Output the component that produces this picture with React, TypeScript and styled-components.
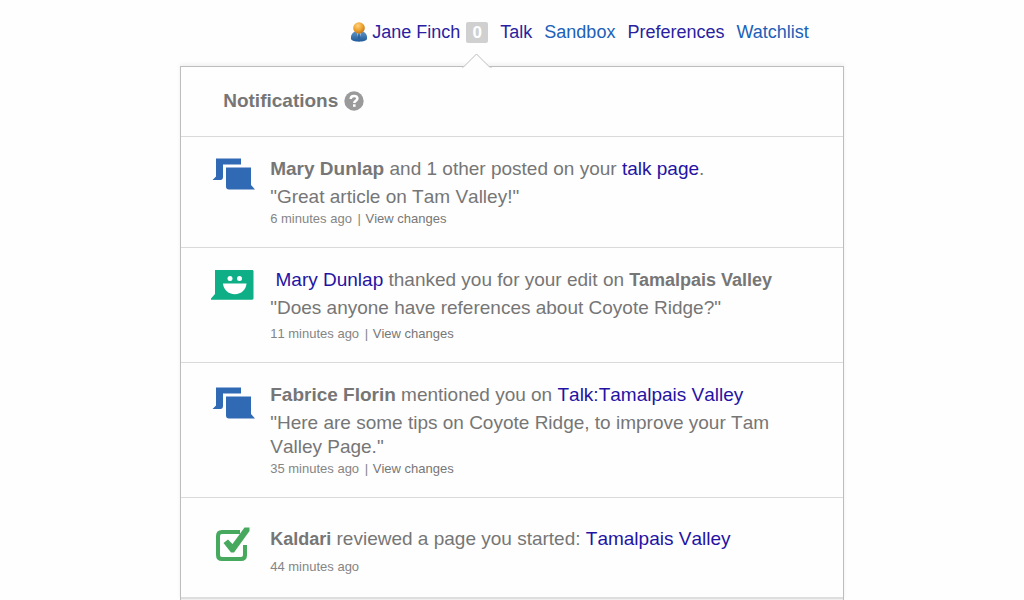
import React from "react";
import styled, { createGlobalStyle } from "styled-components";

const GlobalStyle = createGlobalStyle`
  * { box-sizing: border-box; }
  body {
    margin: 0;
    background: #fefefe;
    color: #767676;
    font-family: "Liberation Sans", Arial, Helvetica, sans-serif;
  }
  a { text-decoration: none; }
  a:hover { text-decoration: underline; }
  p, h1, ul { margin: 0; padding: 0; }
  svg { display: block; }
`;

const Page = styled.div`
  display: flex;
  flex-direction: column;
  width: calc(65% - 2px);
  min-width: 600px;
  max-width: 760px;
  min-height: 100vh;
  margin: 0 auto;
`;

const Nav = styled.nav`
  display: flex;
  align-items: center;
  justify-content: flex-end;
  gap: 12px;
  height: 66px;
  padding: 0 35px 2px 0;
  font-size: 18px;
  line-height: 24px;
`;

const User = styled.div`
  display: flex;
  align-items: center;
  gap: 6px;
`;

const NavLink = styled.a<{ $visited?: boolean }>`
  display: flex;
  align-items: center;
  gap: 4px;
  white-space: nowrap;
  color: ${(p) => (p.$visited ? "#2a1fa0" : "#2060b8")};
`;

const BadgeAnchor = styled.div`
  position: relative;
`;

const Badge = styled.button`
  display: block;
  width: 22px;
  height: 21px;
  padding: 0;
  border: 0;
  border-radius: 2px;
  background: #d0d0d0;
  color: #ffffff;
  font: bold 17px/21px "Liberation Sans", Arial, sans-serif;
  cursor: pointer;
`;

const Caret = styled.svg`
  position: absolute;
  top: 31px;
  left: -4px;
`;

const Panel = styled.section`
  display: flex;
  flex: 1;
  flex-direction: column;
  border: 1px solid #bdbdbd;
  border-bottom: 0;
  background: #fefefe;
  box-shadow: 0 -2px 4px rgba(0, 0, 0, 0.06);
`;

const PanelHeader = styled.header`
  display: flex;
  align-items: center;
  gap: 6px;
  height: 70px;
  padding: 0 0 2px 42px;
  border-bottom: 1px solid #dadada;
`;

const Heading = styled.h1`
  font-size: 19px;
  line-height: 24px;
`;

const HelpButton = styled.button`
  padding: 0;
  border: 0;
  background: none;
  cursor: pointer;
`;

const List = styled.ul`
  list-style: none;
  font-kerning: none;
`;

const Item = styled.li<{ $roomy?: boolean }>`
  display: grid;
  grid-template-columns: 44px 1fr;
  column-gap: 15px;
  padding: ${(p) => (p.$roomy ? "29px 60px 20px 30px" : "20px 60px 18px 30px")};
  border-bottom: 1px solid #dadada;
  font-size: 19px;
  line-height: 24px;

  &:last-child { border-bottom: 0; }
`;

const IconCell = styled.div<{ $tall?: boolean }>`
  padding-top: ${(p) => (p.$tall ? 3 : 0)}px;
`;

const Title = styled.p`
  white-space: nowrap;
`;

const Subject = styled.strong`
  font-size: 18px;
  font-kerning: normal;
`;

const Quote = styled.p`
  margin-top: 4px;
`;

const Meta = styled.p<{ $gap?: number }>`
  margin-top: ${(p) => p.$gap ?? 0}px;
  font-size: 13px;
  line-height: 20px;
  color: #858585;
`;

const Separator = styled.span`
  margin: 0 1px 0 2px;
`;

const TextLink = styled.a`
  color: #2413a3;
`;

const MetaLink = styled.a`
  color: #777777;
`;

const Footer = styled.footer`
  flex: 1;
  border-top: 2px solid #dedede;
  background: #f0f0f0;
`;

const UserIcon = () => (
  <svg width="18" height="21" viewBox="0 0 18 21" aria-hidden="true">
    <defs>
      <radialGradient id="head" cx="40%" cy="30%" r="70%">
        <stop offset="0" stopColor="#ffd27a" />
        <stop offset="0.6" stopColor="#eda02c" />
        <stop offset="1" stopColor="#b9761c" />
      </radialGradient>
      <linearGradient id="torso" x1="0" y1="0" x2="0" y2="1">
        <stop offset="0" stopColor="#5f93c4" />
        <stop offset="1" stopColor="#1f5a98" />
      </linearGradient>
    </defs>
    <path d="M1 17C0.500 13 2.500 10 6 9.500H12C15.500 10 17.500 13 17 17C16 20.500 2 20.500 1 17Z" fill="url(#torso)" />
    <path d="M6.500 10L9 18L11.500 10Z" fill="#a9c9e4" />
    <path d="M8.300 11.500H9.700L10.200 17L9 19L7.800 17Z" fill="#2b659f" />
    <circle cx="9" cy="6" r="5.800" fill="url(#head)" />
  </svg>
);

const HelpIcon = () => (
  <svg width="20" height="20" viewBox="0 0 20 20" aria-hidden="true">
    <circle cx="10" cy="10" r="9.700" fill="#9a9a9a" />
    <path d="M6.700 8C6.700 5.800 8.200 4.900 10 4.900C12 4.900 13.400 6 13.400 7.600C13.400 9.800 10.300 9.900 10.300 12" fill="none" stroke="#fff" strokeWidth="2.500" />
    <rect x="9" y="13.300" width="2.600" height="2.500" fill="#fff" />
  </svg>
);

const ChatIcon = () => (
  <svg width="44" height="34" viewBox="0 0 44 34" aria-hidden="true">
    <path d="M5 1.500H30V7.500H12V20C12 22 11 23 9.500 23H1.500L5 19.500Z" fill="#3069b4" />
    <path d="M15 10.500H40V28L44 32.500H18C16 32.500 15 31.500 15 29.500Z" fill="#3069b4" />
  </svg>
);

const ThanksIcon = () => (
  <svg width="44" height="34" viewBox="0 0 44 34" aria-hidden="true">
    <path d="M4 2H41C42 2 42.500 2.500 42.500 3.500V30C42.500 31 42 31.700 41 31.700H0L-0.500 31L4 26Z" fill="#0eae87" />
    <circle cx="19" cy="10.500" r="2.500" fill="#fff" />
    <circle cx="28.500" cy="10.500" r="2.500" fill="#fff" />
    <path d="M12 15.500H35.500C35 21.500 30.500 26.200 23.800 26.200S12.500 21.500 12 15.500Z" fill="#fff" />
  </svg>
);

const ReviewedIcon = () => (
  <svg width="44" height="36" viewBox="0 0 44 36" aria-hidden="true">
    <path d="M29 5H11Q7 5 7 9V28Q7 32 11 32H30Q34 32 34 28V18" fill="none" stroke="#46a95d" strokeWidth="4" />
    <path d="M12.500 16L17 12.500L21.500 17L33.500 0.500L38.500 0.500V4L23 25.500H20Z" fill="#46a95d" />
  </svg>
);

const MetaLine = ({ age, gap }: { age: string; gap?: number }) => (
  <Meta $gap={gap}>
    {age} <Separator>|</Separator> <MetaLink href="#changes">View changes</MetaLink>
  </Meta>
);

export default function App() {
  return (
    <>
      <GlobalStyle />
      <Page>
        <Nav aria-label="Personal">
          <User>
            <NavLink href="#user" $visited>
              <UserIcon />
              Jane Finch
            </NavLink>
            <BadgeAnchor>
              <Badge type="button">0</Badge>
              <Caret width="30" height="15" viewBox="0 0 30 15" aria-hidden="true">
                <path d="M1 15V14L14.500 1L28 14V15Z" fill="#fefefe" />
                <path d="M0 14H1.500L14.500 1L27.500 14H30" fill="none" stroke="#bdbdbd" />
              </Caret>
            </BadgeAnchor>
          </User>
          <NavLink href="#talk" $visited>Talk</NavLink>
          <NavLink href="#sandbox">Sandbox</NavLink>
          <NavLink href="#preferences" $visited>Preferences</NavLink>
          <NavLink href="#watchlist">Watchlist</NavLink>
        </Nav>
        <Panel>
          <PanelHeader>
            <Heading>Notifications</Heading>
            <HelpButton type="button" aria-label="Help">
              <HelpIcon />
            </HelpButton>
          </PanelHeader>
          <List>
            <Item>
              <IconCell>
                <ChatIcon />
              </IconCell>
              <div>
                <Title>
                  <strong>Mary Dunlap</strong> and 1 other posted on your{" "}
                  <TextLink href="#talk-page">talk page</TextLink>.
                </Title>
                <Quote>"Great article on Tam Valley!"</Quote>
                <MetaLine age="6 minutes ago" />
              </div>
            </Item>
            <Item>
              <IconCell>
                <ThanksIcon />
              </IconCell>
              <div>
                <Title>
                  &nbsp;<TextLink href="#mary">Mary Dunlap</TextLink> thanked you for your edit on{" "}
                  <Subject>Tamalpais Valley</Subject>
                </Title>
                <Quote>"Does anyone have references about Coyote Ridge?"</Quote>
                <MetaLine age="11 minutes ago" gap={4} />
              </div>
            </Item>
            <Item>
              <IconCell $tall>
                <ChatIcon />
              </IconCell>
              <div>
                <Title>
                  <strong>Fabrice Florin</strong> mentioned you on{" "}
                  <TextLink href="#talk-tamalpais">Talk:Tamalpais Valley</TextLink>
                </Title>
                <Quote>"Here are some tips on Coyote Ridge, to improve your Tam Valley Page."</Quote>
                <MetaLine age="35 minutes ago" />
              </div>
            </Item>
            <Item $roomy>
              <IconCell>
                <ReviewedIcon />
              </IconCell>
              <div>
                <Title>
                  <Subject>Kaldari</Subject> reviewed a page you started:{" "}
                  <TextLink href="#tamalpais">Tamalpais Valley</TextLink>
                </Title>
                <Meta $gap={6}>44 minutes ago</Meta>
              </div>
            </Item>
          </List>
          <Footer />
        </Panel>
      </Page>
    </>
  );
}
